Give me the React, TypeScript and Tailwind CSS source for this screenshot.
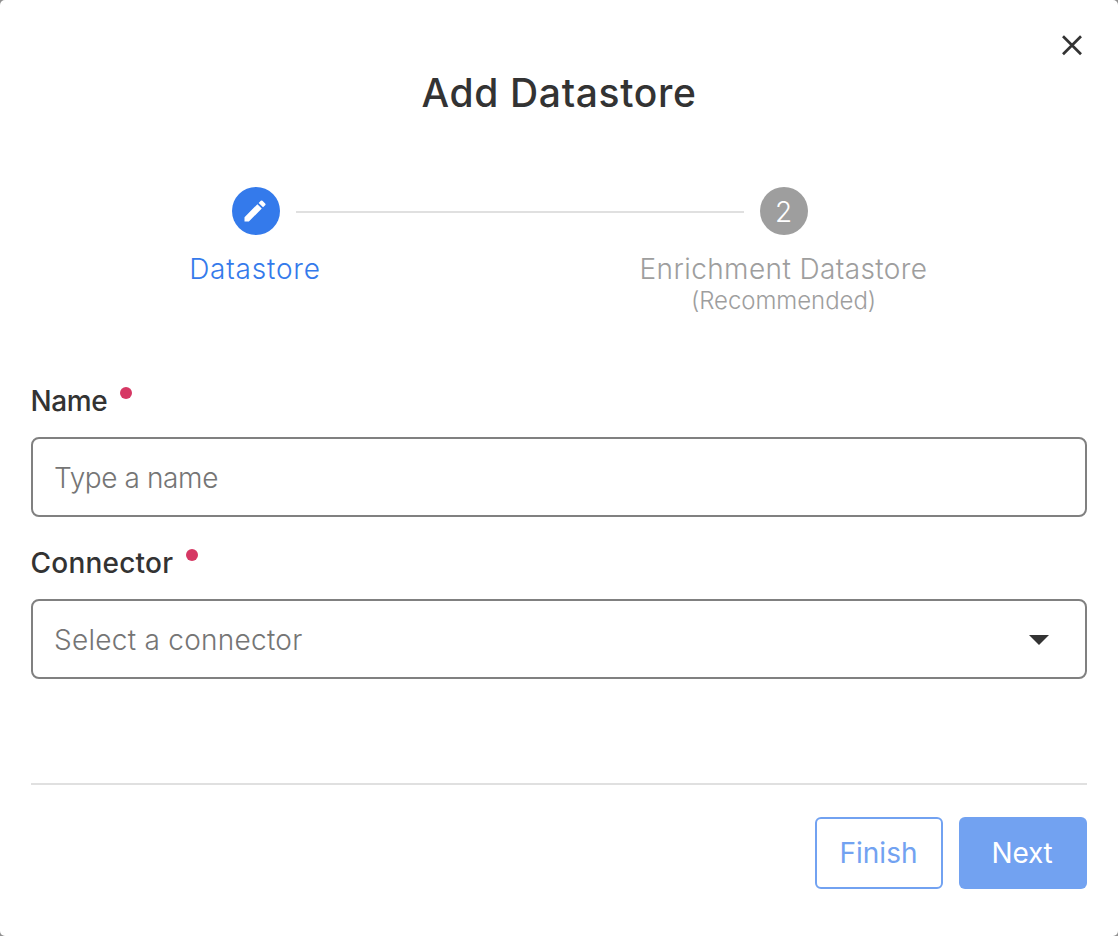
import type { ReactNode } from "react";

function FieldLabel({ htmlFor, children }: { htmlFor: string; children: ReactNode }) {
  return (
    <label htmlFor={htmlFor} className="-ml-[0.5px] flex h-10 items-center gap-[13px] text-[28px] leading-10 font-medium text-[#333333]">
      {children}
      <span className="mb-4 size-3 rounded-full bg-[#d63864]" />
    </label>
  );
}

export default function App() {
  return (
    <div className="h-[936px] w-[1118px] bg-[#909090] font-['Inter','Liberation_Sans',sans-serif]">
      <div role="dialog" aria-label="Add Datastore" className="flex h-full w-full flex-col rounded-[5px] bg-white px-[31px]">
        <div className="flex h-[68px] shrink-0 justify-end pt-[34px] pr-[4px]">
          <button type="button" aria-label="Close" className="size-[22px]">
            <svg viewBox="0 0 22 22" className="size-[22px]" fill="none" stroke="#333333" strokeWidth="2.7">
              <path d="M2 2.2 20 20.2M20 2.2 2 20.2" />
            </svg>
          </button>
        </div>
        <h1 className="h-[50px] text-center text-[39px] leading-[50px] font-medium tracking-[0.65px] text-[#333333]">
          <span>Add Datastore</span>
        </h1>

        <div className="mt-[69px] grid h-[48px] shrink-0 grid-cols-[48px_448px_48px] items-center gap-4 pl-[201px]">
          <div className="flex size-12 items-center justify-center rounded-full bg-[#347aeb]">
            <svg viewBox="0 0 24 24" className="mr-[2px] size-[28px]" fill="white">
              <path d="M3 17.25V21h3.75L17.81 9.94l-3.75-3.75L3 17.25zM20.71 7.04a1 1 0 0 0 0-1.41l-2.34-2.34a1 1 0 0 0-1.41 0l-1.83 1.83 3.75 3.75 1.83-1.83z" />
            </svg>
          </div>
          <div className="mt-[2px] h-[2px] bg-[#e0e0e0]" />
          <div className="flex size-12 items-center justify-center rounded-full bg-[#9e9e9e] pt-px pr-px text-[28px] font-light text-white">
            <span>2</span>
          </div>
        </div>
        <div className="mt-4 grid h-[100px] shrink-0 grid-cols-2 text-center text-[28px] leading-9 font-light">
          <div className="pr-[80px] tracking-[0.8px] text-[#347aeb]"><span>Datastore</span></div>
          <div className="pr-[79px] tracking-[0.4px] text-[#9e9e9e]">
            <div><span>Enrichment Datastore</span></div>
            <div className="-mt-[2px] text-[24px] leading-8 tracking-[-0.05px]"><span>(Recommended)</span></div>
          </div>
        </div>

        <div className="mt-[30px]">
          <FieldLabel htmlFor="name"><span className="tracking-[-0.4px]">Name</span></FieldLabel>
          <input
            id="name"
            placeholder="Type a name"
            className="mt-4 block h-20 w-full rounded-lg border-2 border-[#808080] pt-[2px] pr-[22px] pl-[21px] text-[28px] font-light tracking-[-0.4px] text-[#333333] placeholder:text-[#757575]"
          />
        </div>
        <div className="mt-[26px]">
          <FieldLabel htmlFor="connector"><span className="tracking-[0.22px]">Connector</span></FieldLabel>
          <button
            id="connector"
            type="button"
            className="mt-4 flex h-20 w-full items-center justify-between rounded-lg border-2 border-[#808080] pt-[2px] pr-[36px] pl-[21px] text-[28px] font-light tracking-[0.27px] text-[#757575]"
          >
            <span>Select a connector</span>
            <svg viewBox="0 0 20 10" className="h-[10px] w-[20px]" fill="#333333">
              <path d="M0 0h20L10 10z" />
            </svg>
          </button>
        </div>

        <div className="mt-[104px] flex justify-end gap-4 border-t-2 border-[#e0e0e0] pt-8">
          <button type="button" className="h-[72px] w-32 rounded-md border-2 border-[#72a2f1] pr-px text-[28px] text-[#72a2f1]"><span>Finish</span></button>
          <button type="button" className="h-[72px] w-32 rounded-md bg-[#72a2f1] pr-[2px] text-[28px] tracking-[-0.2px] text-white"><span>Next</span></button>
        </div>
      </div>
    </div>
  );
}
